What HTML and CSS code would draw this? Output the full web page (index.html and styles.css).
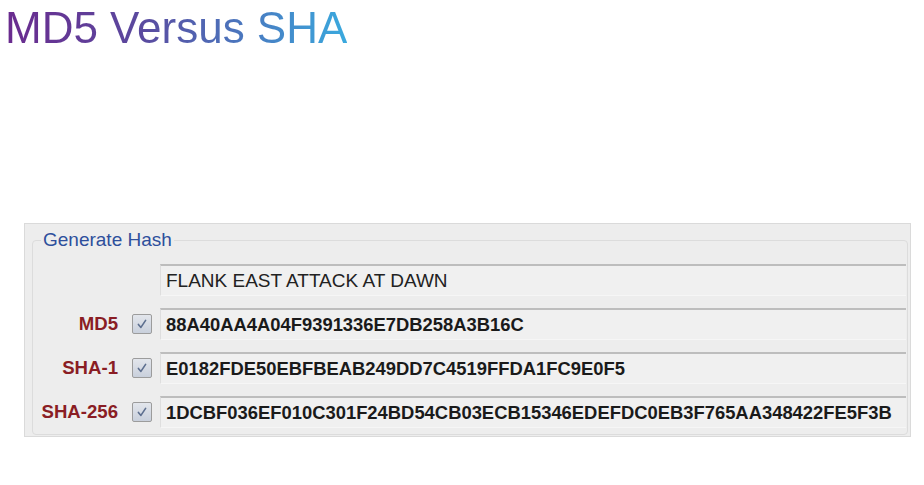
FILE: index.html
```html
<!DOCTYPE html>
<html>
<head>
<meta charset="utf-8">
<link rel="stylesheet" href="styles.css">
</head>
<body>
<h1 class="title"><span class="title-text">MD5 Versus SHA</span></h1>
<div class="panel">
  <fieldset class="group">
    <legend class="group-legend">Generate Hash</legend>
    <div class="rows">
      <div class="label"></div>
      <div class="check-slot"></div>
      <div class="field field-plain">FLANK EAST ATTACK AT DAWN</div>

      <div class="label">MD5</div>
      <div class="check-slot"><span class="checkbox"><svg viewBox="0 0 20 20" width="18" height="18"><path d="M6 10.5 L8.8 13.8 L14 6" fill="none" stroke="#5d6f8f" stroke-width="1.8" stroke-linecap="round" stroke-linejoin="round"/></svg></span></div>
      <div class="field">88A40AA4A04F9391336E7DB258A3B16C</div>

      <div class="label">SHA-1</div>
      <div class="check-slot"><span class="checkbox"><svg viewBox="0 0 20 20" width="18" height="18"><path d="M6 10.5 L8.8 13.8 L14 6" fill="none" stroke="#5d6f8f" stroke-width="1.8" stroke-linecap="round" stroke-linejoin="round"/></svg></span></div>
      <div class="field">E0182FDE50EBFBEAB249DD7C4519FFDA1FC9E0F5</div>

      <div class="label">SHA-256</div>
      <div class="check-slot"><span class="checkbox"><svg viewBox="0 0 20 20" width="18" height="18"><path d="M6 10.5 L8.8 13.8 L14 6" fill="none" stroke="#5d6f8f" stroke-width="1.8" stroke-linecap="round" stroke-linejoin="round"/></svg></span></div>
      <div class="field">1DCBF036EF010C301F24BD54CB03ECB15346EDEFDC0EB3F765AA348422FE5F3B</div>
    </div>
  </fieldset>
</div>
</body>
</html>
```

FILE: styles.css
```css
html, body {
  margin: 0;
  padding: 0;
  background: #ffffff;
  font-family: "Liberation Sans", Arial, sans-serif;
}

.title {
  margin: 0;
  padding: 2px 0 0 5px;
  font-size: 44px;
  line-height: 52px;
  font-weight: normal;
  height: 54px;
}

.title-text {
  display: inline-block;
  background: linear-gradient(90deg, #6a2a8e 0%, #5a4a9f 40%, #4a78bf 70%, #3aa9de 100%);
  -webkit-background-clip: text;
  background-clip: text;
  color: transparent;
}

.panel {
  margin: 167px 0 0 24px;
  width: 876px;
  background: #ededed;
  border: 1px solid #dadada;
  padding: 6px 2px 1px 7px;
  box-sizing: content-box;
}

.group {
  margin: 0;
  padding: 0 1px 6px 0;
  border: 1px solid #dcdcdc;
  border-radius: 4px;
}

.group-legend {
  margin-left: 8px;
  padding: 0 2px;
  font-size: 19px;
  line-height: 20px;
  color: #2e4f9c;
}

.rows {
  display: grid;
  grid-template-columns: 85px 20px 1fr;
  column-gap: 14px;
  row-gap: 12px;
  padding-top: 14px;
  align-items: center;
}

.rows .check-slot {
  margin-right: -6px;
}

.label {
  text-align: right;
  font-weight: bold;
  font-size: 18.6px;
  color: #8a1d24;
}

.check-slot {
  height: 20px;
  display: flex;
  align-items: center;
}

.checkbox {
  width: 18px;
  height: 18px;
  border: 1px solid #9c9c9c;
  border-radius: 2px;
  background: linear-gradient(180deg, #e3e6ec 0%, #c9d0dc 100%);
  display: flex;
  align-items: center;
  justify-content: center;
}

.field {
  height: 32px;
  box-sizing: border-box;
  margin-left: -6px;
  padding-left: 5px;
  display: flex;
  align-items: center;
  background: #f0f0f0;
  border-top: 2px solid #bdbdbd;
  border-left: 1px solid #dedede;
  border-bottom: 1px solid #f6f6f6;
  font-size: 18.4px;
  font-weight: bold;
  color: #1a1a1a;
  white-space: nowrap;
}

.field-plain {
  font-weight: normal;
  font-size: 19px;
  color: #222222;
}
```
